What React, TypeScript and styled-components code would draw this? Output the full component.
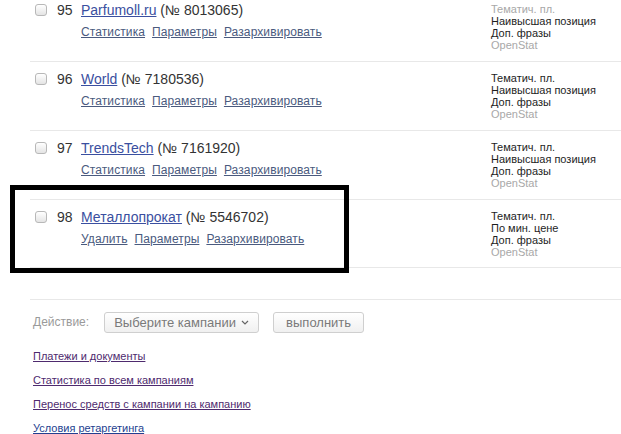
import React from "react";
import styled, { createGlobalStyle } from "styled-components";

const GlobalStyle = createGlobalStyle`
  html, body {
    margin: 0;
    padding: 0;
    background: #fff;
    font-family: "Liberation Sans", Arial, sans-serif;
    overflow: hidden;
  }
`;

type Campaign = {
  num: number;
  name: string;
  id: string;
  first: string;
  strategy: string;
  mutedFirst?: boolean;
  actions: string[];
  marked?: boolean;
};

const campaigns: Campaign[] = [
  { num: 95, name: "Parfumoll.ru", id: "8013065", first: "Тематич. пл.", strategy: "Наивысшая позиция", mutedFirst: true, actions: ["Статистика", "Параметры", "Разархивировать"] },
  { num: 96, name: "World", id: "7180536", first: "Тематич. пл.", strategy: "Наивысшая позиция", actions: ["Статистика", "Параметры", "Разархивировать"] },
  { num: 97, name: "TrendsTech", id: "7161920", first: "Тематич. пл.", strategy: "Наивысшая позиция", actions: ["Статистика", "Параметры", "Разархивировать"] },
  { num: 98, name: "Металлопрокат", id: "5546702", first: "Тематич. пл.", strategy: "По мин. цене", actions: ["Удалить", "Параметры", "Разархивировать"], marked: true },
];

const footerLinks = [
  { text: "Платежи и документы", visited: true },
  { text: "Статистика по всем кампаниям", visited: true },
  { text: "Перенос средств с кампании на кампанию", visited: true },
  { text: "Условия ретаргетинга", visited: false },
];

const App = () => {
  return (
    <>
      <GlobalStyle />
      <Page>
        <Table>
          {campaigns.map((c) => (
            <Row key={c.num}>
              <Check type="checkbox" />
              <Num>{c.num}</Num>
              <Info>
                <Title>
                  <NameLink href="#">{c.name}</NameLink> (№ {c.id})
                </Title>
                <Actions>
                  {c.actions.map((a) => (
                    <ActionLink key={a} href="#">{a}</ActionLink>
                  ))}
                </Actions>
              </Info>
              <Params>
                <Param $muted={c.mutedFirst}>{c.first}</Param>
                <Param>{c.strategy}</Param>
                <Param>Доп. фразы</Param>
                <Param $muted>OpenStat</Param>
              </Params>
              {c.marked && <Frame />}
            </Row>
          ))}
        </Table>
        <Footer>
          <ActionBar>
            <Label>Действие:</Label>
            <SelectButton>
              Выберите кампании
              <svg width="8" height="5" viewBox="0 0 8 5">
                <path d="M1 1 L4 4 L7 1" fill="none" stroke="#666" strokeWidth="1.2" />
              </svg>
            </SelectButton>
            <RunButton>выполнить</RunButton>
          </ActionBar>
          <LinkList>
            {footerLinks.map((l) => (
              <FooterLink key={l.text} href="#" $visited={l.visited}>{l.text}</FooterLink>
            ))}
          </LinkList>
        </Footer>
      </Page>
    </>
  );
};

const Page = styled.div`
  margin-top: -8px;
  padding-left: 30px;
  width: 591px;
`;

const Table = styled.div`
  display: flex;
  flex-direction: column;
`;

const Row = styled.div`
  position: relative;
  display: grid;
  grid-template-columns: 22px 24px 410px auto;
  align-items: start;
  box-sizing: border-box;
  height: 69px;
  padding: 8px 0 0 5px;
  border-top: 1px solid #e8e8e8;
  &:last-child {
    border-bottom: 1px solid #e8e8e8;
  }
`;

const Check = styled.input`
  appearance: none;
  margin: 3px 0 0 0;
  width: 12px;
  height: 12px;
  border: 1px solid #b8b8b8;
  border-radius: 3px;
  background: linear-gradient(#ffffff, #e4e4e4);
  box-sizing: border-box;
`;

const Num = styled.span`
  font-size: 14px;
  line-height: 18px;
  color: #333;
`;

const Info = styled.div`
  display: flex;
  flex-direction: column;
`;

const Title = styled.div`
  font-size: 14px;
  line-height: 18px;
  color: #333;
  white-space: nowrap;
`;

const NameLink = styled.a`
  color: #3a4fa0;
  text-decoration: underline;
`;

const Actions = styled.div`
  display: flex;
  gap: 7px;
  margin-top: 5px;
  font-size: 12px;
  line-height: 16px;
`;

const ActionLink = styled.a`
  color: #4a5a7e;
  text-decoration: underline;
  letter-spacing: 0.1px;
`;

const Params = styled.div`
  display: flex;
  flex-direction: column;
  padding-top: 2px;
`;

const Param = styled.span<{ $muted?: boolean }>`
  font-size: 11px;
  line-height: 12px;
  color: ${(p) => (p.$muted ? "#a8a8a8" : "#1e1e1e")};
  white-space: nowrap;
`;

const Frame = styled.div`
  position: absolute;
  left: -20px;
  top: -15px;
  width: 339px;
  height: 88px;
  box-sizing: border-box;
  border: 5px solid #000;
  pointer-events: none;
`;

const Footer = styled.div`
  margin-top: 31px;
  border-top: 1px solid #e8e8e8;
  padding: 11px 0 0 3px;
`;

const ActionBar = styled.div`
  display: flex;
  align-items: center;
  height: 22px;
`;

const Label = styled.span`
  font-size: 12px;
  color: #9a9a9a;
  margin-right: 15px;
`;

const ButtonBase = styled.button`
  box-sizing: border-box;
  height: 21px;
  border: 1px solid #cfcfcf;
  border-radius: 3px;
  background: linear-gradient(#ffffff, #f0f0f0);
  font-family: "Liberation Sans", Arial, sans-serif;
  font-size: 13px;
  color: #7a7a7a;
  padding: 0;
  display: flex;
  align-items: center;
  justify-content: center;
`;

const SelectButton = styled(ButtonBase)`
  width: 155px;
  gap: 5px;
  svg {
    margin-top: 1px;
  }
`;

const RunButton = styled(ButtonBase)`
  width: 91px;
  margin-left: 14px;
`;

const LinkList = styled.div`
  display: flex;
  flex-direction: column;
  align-items: flex-start;
  gap: 9px;
  margin-top: 16px;
`;

const FooterLink = styled.a<{ $visited: boolean }>`
  font-size: 11px;
  line-height: 15px;
  color: ${(p) => (p.$visited ? "#4e2a6e" : "#243f8f")};
  text-decoration: underline;
`;

export default App;
